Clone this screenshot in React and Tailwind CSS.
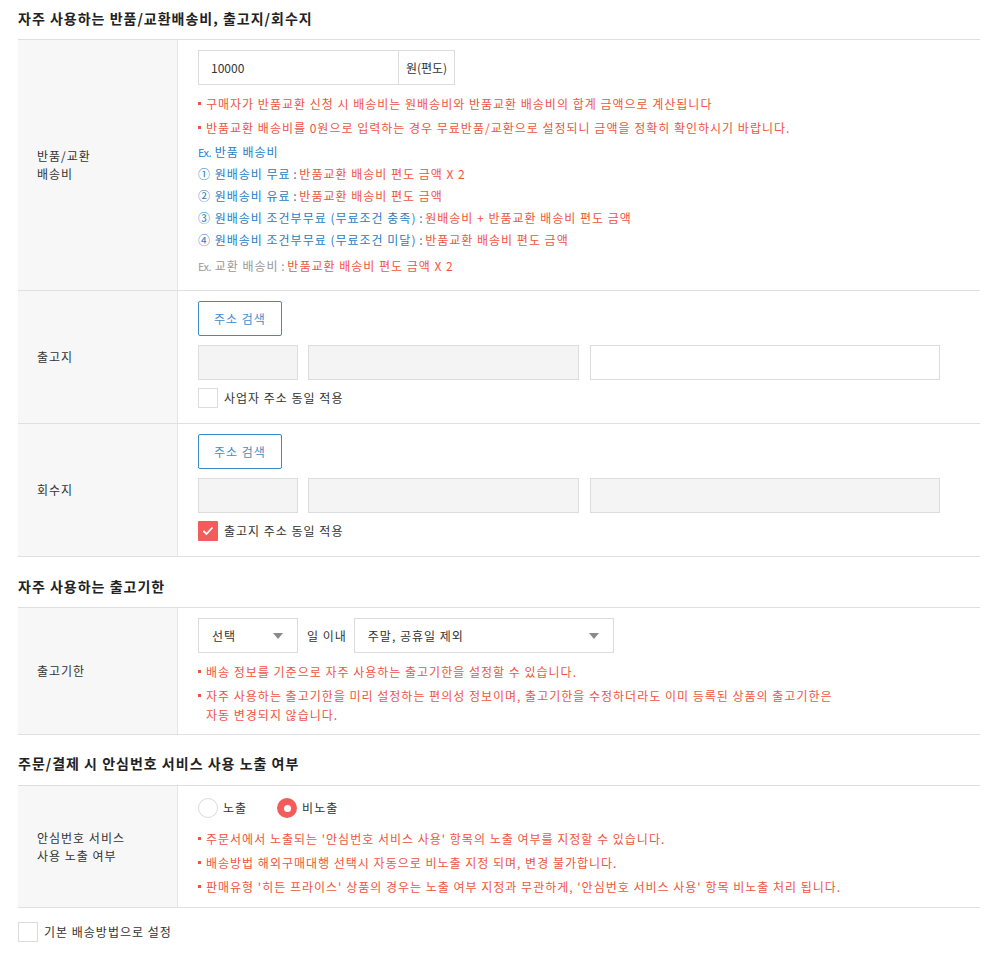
import React from "react";

const RED = "text-[#ef5442]";

function Note({ children }) {
  return (
    <li className={`flex items-start leading-[19px] ${RED}`}>
      <span className="mt-[8px] mr-[5px] h-[3px] w-[3px] shrink-0 bg-[#ef5442]" />
      <span>{children}</span>
    </li>
  );
}

function Checkbox({ checked, label }) {
  return (
    <label className="flex items-center gap-[6px] text-[12px] text-[#333]">
      {checked ? (
        <span className="flex h-[20px] w-[20px] items-center justify-center rounded-[1px] bg-[#f25d5b]">
          <svg width="12" height="10" viewBox="0 0 12 10" fill="none">
            <polyline points="1.5,5 4.5,8 10.5,1.5" stroke="#fff" strokeWidth="1.8" />
          </svg>
        </span>
      ) : (
        <span className="h-[20px] w-[20px] border border-[#dcdcdc] bg-white" />
      )}
      <span className="leading-[20px]">{label}</span>
    </label>
  );
}

function Radio({ checked, label }) {
  return (
    <label className="flex items-center gap-[5px] text-[12px] text-[#333]">
      {checked ? (
        <span className="flex h-[20px] w-[20px] items-center justify-center rounded-full bg-[#f25d5b]">
          <span className="h-[7px] w-[7px] rounded-full bg-white" />
        </span>
      ) : (
        <span className="h-[20px] w-[20px] rounded-full border border-[#dcdcdc] bg-white" />
      )}
      <span className="leading-[20px]">{label}</span>
    </label>
  );
}

function Row({ label, children, pb = "pb-[15px]" }) {
  return (
    <div className="flex border-b border-[#e0e0e0]">
      <div className="flex w-[160px] shrink-0 items-center border-r border-[#e6e6e6] bg-[#f7f7f7] pl-[19px] leading-[18px] text-[#333]">
        {label}
      </div>
      <div className={`flex-1 pl-[20px] pt-[10px] ${pb}`}>{children}</div>
    </div>
  );
}

function SearchButton() {
  return (
    <button className="h-[35px] w-[84px] rounded-[2px] border border-[#3b8bc6] bg-white text-[12px] tracking-[1px] text-[#3f8ec8]">
      주소 검색
    </button>
  );
}

function Box({ className }) {
  return <div className={`h-[35px] border border-[#dcdcdc] ${className}`} />;
}

function Select({ width, value }) {
  return (
    <div className={`flex h-[35px] ${width} items-center justify-between border border-[#dcdcdc] bg-white pl-[13px] pr-[14px] text-[#333]`}>
      <span>{value}</span>
      <svg width="10" height="6" viewBox="0 0 10 6">
        <polygon points="0,0 10,0 5,6" fill="#8a8a8a" />
      </svg>
    </div>
  );
}

function Title({ children, className }) {
  return <h2 className={`text-[14px] font-bold leading-[20px] text-[#222] ${className}`}>{children}</h2>;
}

// narrow latin bits in the example lines
const Ex = () => <span className="text-[11px] tracking-[-0.5px]">Ex.</span>;
const Sep = () => <span className="tracking-normal"> : </span>;

export default function App() {
  return (
    <div className="min-h-[955px] bg-white pl-[18px] pr-[17px] font-['Noto_Sans_CJK_KR',sans-serif] text-[12px] tracking-[1px]">
      <Title className="pt-[8px] pb-[11px]">자주 사용하는 반품/교환배송비, 출고지/회수지</Title>

      <div className="border-t border-[#dedede]">
        {/* 반품/교환 배송비 */}
        <Row label={<span>반품/교환<br />배송비</span>} pb="pb-[13px]">
          <div className="flex h-[35px] w-[257px] border border-[#dcdcdc]">
            <div className="flex w-[199px] items-center pl-[12px] tracking-normal text-[#333]">10000</div>
            <div className="flex flex-1 items-center justify-center border-l border-[#dcdcdc] tracking-normal text-[#333]">원(편도)</div>
          </div>
          <ul className="mt-[9px] space-y-[5px]">
            <Note>구매자가 반품교환 신청 시 배송비는 원배송비와 반품교환 배송비의 합계 금액으로 계산됩니다</Note>
            <Note>반품교환 배송비를 0원으로 입력하는 경우 무료반품/교환으로 설정되니 금액을 정확히 확인하시기 바랍니다.</Note>
          </ul>
          <div className="mt-[4px] leading-[22px] text-[#2a7dc2]">
            <div><Ex /> 반품 배송비</div>
            <div>① 원배송비 무료<Sep /><span className={RED}>반품교환 배송비 편도 금액 X 2</span></div>
            <div>② 원배송비 유료<Sep /><span className={RED}>반품교환 배송비 편도 금액</span></div>
            <div>③ 원배송비 조건부무료 (무료조건 충족)<Sep /><span className={RED}>원배송비 + 반품교환 배송비 편도 금액</span></div>
            <div>④ 원배송비 조건부무료 (무료조건 미달)<Sep /><span className={RED}>반품교환 배송비 편도 금액</span></div>
          </div>
          <div className="mt-[4px] leading-[22px] text-[#999]">
            <Ex /> 교환 배송비<Sep /><span className={RED}>반품교환 배송비 편도 금액 X 2</span>
          </div>
        </Row>

        {/* 출고지 */}
        <Row label="출고지">
          <SearchButton />
          <div className="mt-[9px] flex">
            <Box className="w-[100px] bg-[#f4f4f4]" />
            <Box className="ml-[10px] w-[271px] bg-[#f4f4f4]" />
            <Box className="ml-[11px] w-[350px] bg-white" />
          </div>
          <div className="mt-[8px]">
            <Checkbox label="사업자 주소 동일 적용" />
          </div>
        </Row>

        {/* 회수지 */}
        <Row label="회수지">
          <SearchButton />
          <div className="mt-[9px] flex">
            <Box className="w-[100px] bg-[#f4f4f4]" />
            <Box className="ml-[10px] w-[271px] bg-[#f4f4f4]" />
            <Box className="ml-[11px] w-[350px] bg-[#f4f4f4]" />
          </div>
          <div className="mt-[8px]">
            <Checkbox checked label="출고지 주소 동일 적용" />
          </div>
        </Row>
      </div>

      <Title className="pt-[19px] pb-[11px]">자주 사용하는 출고기한</Title>

      <div className="border-t border-[#dedede]">
        <Row label="출고기한" pb="pb-[10px]">
          <div className="flex items-center">
            <Select width="w-[100px]" value="선택" />
            <span className="ml-[9px] mr-[7px] text-[#333]">일 이내</span>
            <Select width="w-[260px]" value="주말, 공휴일 제외" />
          </div>
          <ul className="mt-[9px] space-y-[5px]">
            <Note>배송 정보를 기준으로 자주 사용하는 출고기한을 설정할 수 있습니다.</Note>
            <Note>
              자주 사용하는 출고기한을 미리 설정하는 편의성 정보이며, 출고기한을 수정하더라도 이미 등록된 상품의 출고기한은
              <br />
              자동 변경되지 않습니다.
            </Note>
          </ul>
        </Row>
      </div>

      <Title className="pt-[18px] pb-[12px]">주문/결제 시 안심번호 서비스 사용 노출 여부</Title>

      <div className="border-t border-[#dedede]">
        <Row label={<span>안심번호 서비스<br />사용 노출 여부</span>} pb="pb-[11px]">
          <div className="flex h-[24px] items-center gap-[30px]">
            <Radio label="노출" />
            <Radio checked label="비노출" />
          </div>
          <ul className="mt-[9px] space-y-[5px]">
            <Note>주문서에서 노출되는 '안심번호 서비스 사용' 항목의 노출 여부를 지정할 수 있습니다.</Note>
            <Note>배송방법 해외구매대행 선택시 자동으로 비노출 지정 되며, 변경 불가합니다.</Note>
            <Note>판매유형 '히든 프라이스' 상품의 경우는 노출 여부 지정과 무관하게, '안심번호 서비스 사용' 항목 비노출 처리 됩니다.</Note>
          </ul>
        </Row>
      </div>

      <div className="mt-[14px]">
        <Checkbox label="기본 배송방법으로 설정" />
      </div>
    </div>
  );
}
